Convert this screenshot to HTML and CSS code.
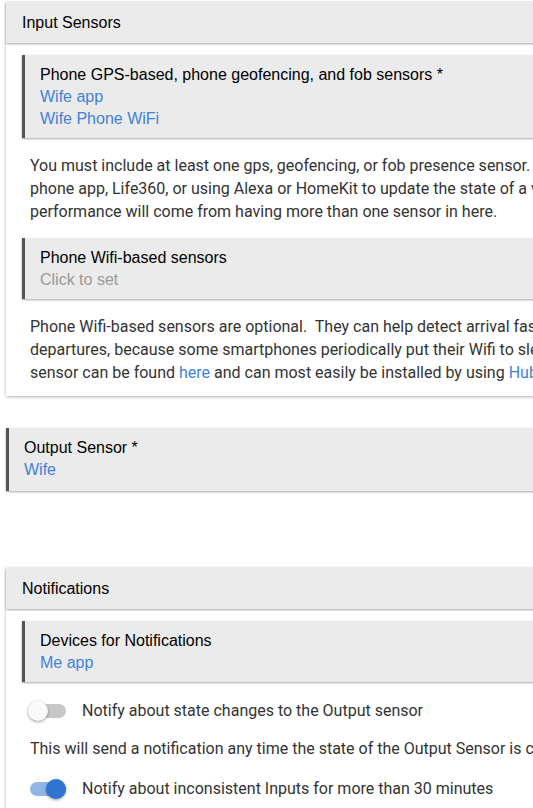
FILE: index.html
```html
<!DOCTYPE html>
<html lang="en">
<head>
  <meta charset="UTF-8">
  <title>Presence Sensor Settings</title>
  <link rel="stylesheet" href="styles.css">
</head>
<body>
  <div class="page">

    <div class="card">
      <div class="card-header">Input Sensors</div>
      <div class="card-body">
        <div class="input-box">
          <div class="input-title">Phone GPS-based, phone geofencing, and fob sensors *</div>
          <div class="input-value">Wife app</div>
          <div class="input-value">Wife Phone WiFi</div>
        </div>
        <p class="note">You must include at least one gps, geofencing, or fob presence sensor. This can be either a phone app, Life360, or using Alexa or HomeKit to update the state of a virtual sensor. Best performance will come from having more than one sensor in here.</p>

        <div class="input-box">
          <div class="input-title">Phone Wifi-based sensors</div>
          <div class="input-value empty">Click to set</div>
        </div>
        <p class="note">Phone Wifi-based sensors are optional.&nbsp; They can help detect arrival faster, but not departures, because some smartphones periodically put their Wifi to sleep. A driver for this sensor can be found <a href="#">here</a> and can most easily be installed by using <a href="#">Hubitat HPM</a>.</p>
      </div>
    </div>

    <div class="input-box standalone">
      <div class="input-title">Output Sensor *</div>
      <div class="input-value">Wife</div>
    </div>

    <div class="card notifications">
      <div class="card-header">Notifications</div>
      <div class="card-body">
        <div class="input-box">
          <div class="input-title">Devices for Notifications</div>
          <div class="input-value">Me app</div>
        </div>

        <label class="toggle-row">
          <span class="switch"><span class="thumb"></span></span>
          <span>Notify about state changes to the Output sensor</span>
        </label>
        <p class="note single">This will send a notification any time the state of the Output Sensor is changed.</p>

        <label class="toggle-row">
          <span class="switch on"><span class="thumb"></span></span>
          <span>Notify about inconsistent Inputs for more than 30 minutes</span>
        </label>
      </div>
    </div>

  </div>
</body>
</html>
```

FILE: styles.css
```css
* {
  box-sizing: border-box;
}

body {
  margin: 0;
  background: #fff;
  overflow: hidden;
  font-family: "Liberation Sans", Arial, sans-serif;
  font-size: 16px;
  color: #000;
}

.page {
  width: 714px;
  padding: 2px 0 0 6px;
}

.card {
  background: #fff;
  box-shadow: 0 1px 3px rgba(0, 0, 0, 0.3);
}

.card-header {
  background: #ebebeb;
  height: 41px;
  line-height: 41px;
  padding: 0 16px;
  box-shadow: 0 1px 2px rgba(0, 0, 0, 0.35);
  position: relative;
}

.card-body {
  padding: 12px 16px 12px;
}

.input-box {
  background: #ebebeb;
  border-left: 3px solid #555;
  padding: 9px 15px 8px;
  line-height: 22px;
  box-shadow: 0 1px 2px rgba(0, 0, 0, 0.35);
}

.input-value {
  color: #3f82db;
}

.input-value.empty {
  color: #999;
}

.note {
  font-family: Roboto, sans-serif;
  color: #333;
  line-height: 23px;
  margin: 16px 8px 15px;
}

.note:last-child {
  margin-bottom: 0;
}

.note a {
  color: #3f82db;
  text-decoration: none;
}

.standalone {
  margin-top: 32px;
  padding: 9px 15px 10px;
}

.notifications {
  margin-top: 77px;
}

.toggle-row {
  display: flex;
  align-items: center;
  gap: 16px;
  margin: 17px 8px 0;
  font-family: Roboto, sans-serif;
  color: #333;
  line-height: 23px;
}

.note.single {
  margin: 15px 8px 16px;
}

.switch {
  position: relative;
  width: 36px;
  height: 14px;
  border-radius: 7px;
  background: #c8c8c8;
  flex-shrink: 0;
}

.switch .thumb {
  position: absolute;
  top: -3px;
  left: -2px;
  width: 20px;
  height: 20px;
  border-radius: 50%;
  background: #fafafa;
  box-shadow: 0 1px 3px rgba(0, 0, 0, 0.4);
}

.switch.on {
  background: #92b5e8;
}

.switch.on .thumb {
  left: 16px;
  background: #2f74d0;
}
```
